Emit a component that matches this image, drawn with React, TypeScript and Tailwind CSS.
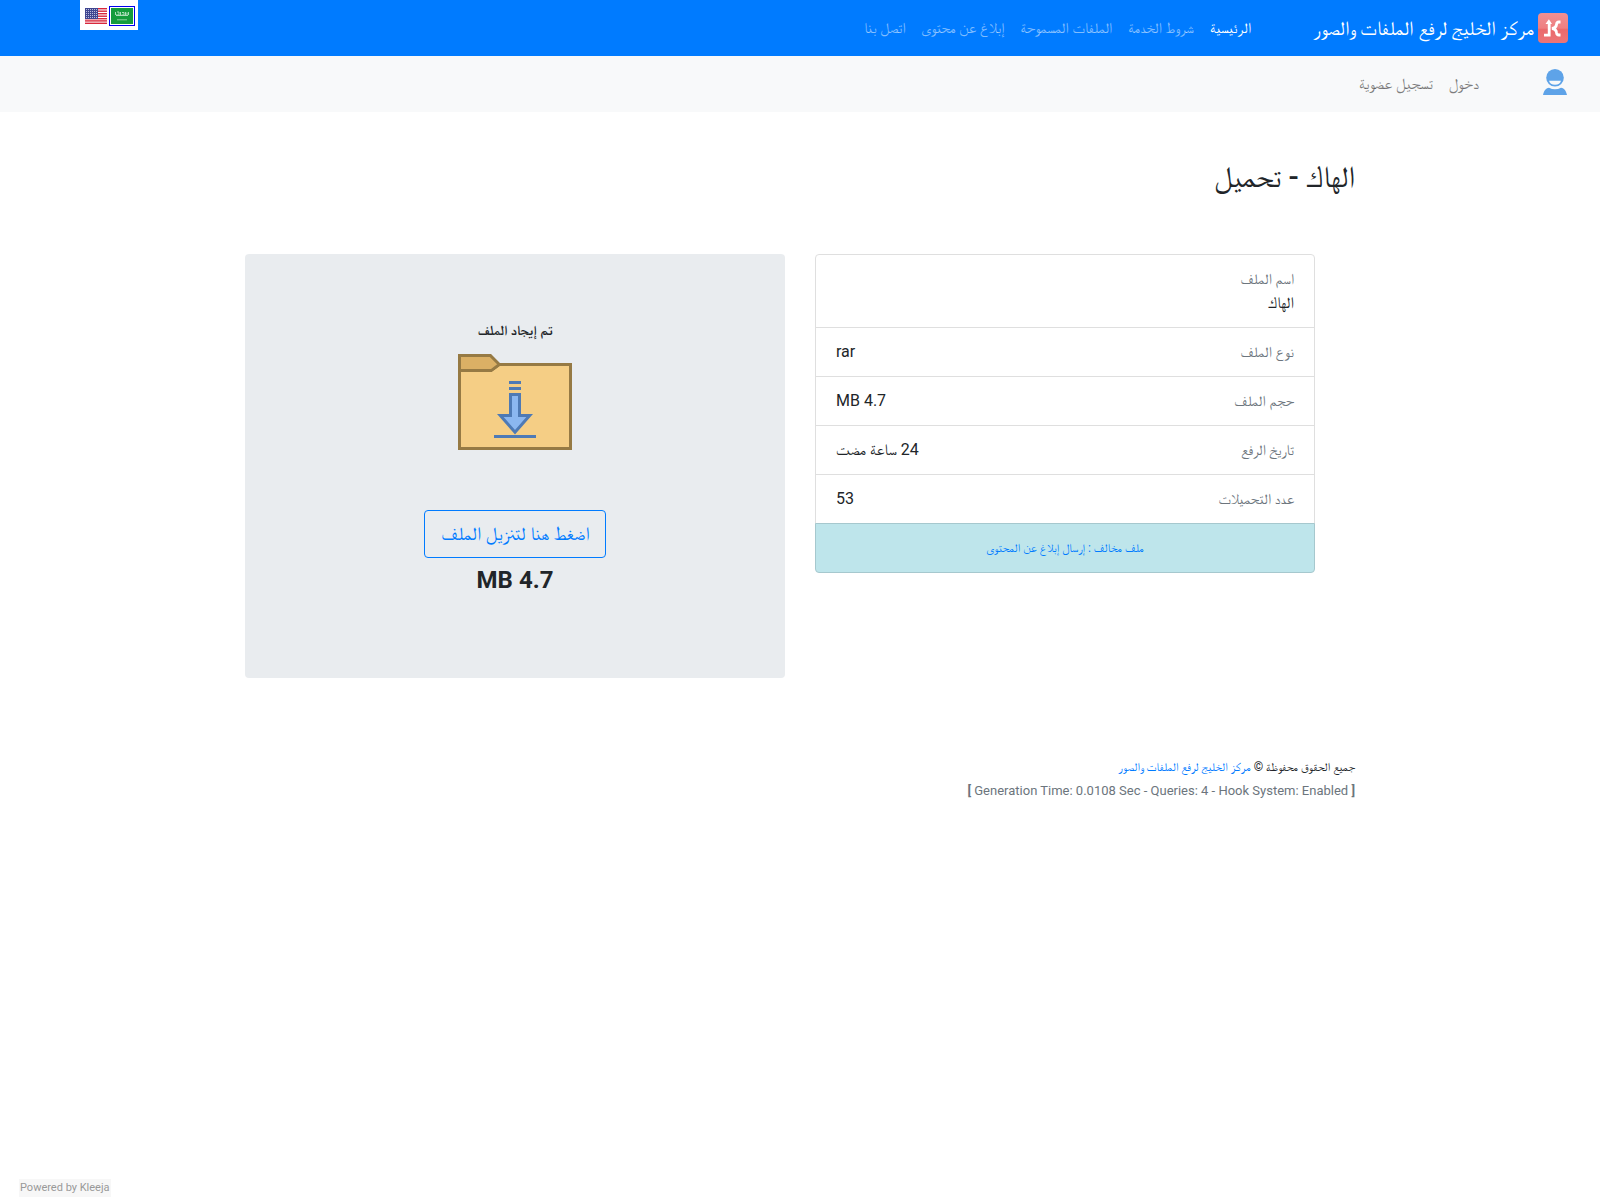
const navLinks = [
  { label: "الرئيسية", active: true },
  { label: "شروط الخدمة" },
  { label: "الملفات المسموحة" },
  { label: "إبلاغ عن محتوى" },
  { label: "اتصل بنا" },
];

const fileInfo = [
  { label: "نوع الملف", value: "rar" },
  { label: "حجم الملف", value: "4.7 MB" },
  { label: "تاريخ الرفع", value: "24 ساعة مضت" },
  { label: "عدد التحميلات", value: "53" },
];

function KleejaLogo() {
  return (
    <svg viewBox="0 0 30 30" className="h-[30px] w-[30px]" aria-hidden="true">
      <defs>
        <linearGradient id="logo-bg" x1="0" y1="0" x2="0" y2="1">
          <stop offset="0" stopColor="#f09092" />
          <stop offset="0.5" stopColor="#ee7f81" />
          <stop offset="0.55" stopColor="#ea6a6c" />
          <stop offset="1" stopColor="#ec7577" />
        </linearGradient>
      </defs>
      <rect width="30" height="30" rx="4" fill="url(#logo-bg)" />
      <path d="M6 22.2H11.2V9" fill="none" stroke="#fff" strokeWidth="2.8" />
      <path d="M7.5 11L10.9 6.2L14 11Z" fill="#fff" />
      <path
        d="M22.5 9H20.8Q18.8 9 18.5 11.5Q18.2 14.8 14 15.5Q18.2 16.2 18.5 19.5Q18.8 22 20.8 22H22.5"
        fill="none"
        stroke="#fff"
        strokeWidth="2.8"
      />
    </svg>
  );
}

function UserIcon() {
  return (
    <svg viewBox="0 0 25 30" className="h-[30px] w-[25px]" aria-hidden="true">
      <circle cx="12" cy="8.8" r="8.8" fill="#5ea3e8" />
      <path d="M6 11.7H18Q17 15.7 12 15.7Q7 15.7 6 11.7Z" fill="#f8f9fa" />
      <path
        d="M0 26C1 22 2.5 19.2 6 18.8Q12 21.8 18 18.8C21.5 19.2 23 22 24 26Z"
        fill="#5ea3e8"
      />
    </svg>
  );
}

function UsFlag() {
  return (
    <svg viewBox="0 0 22 16" className="h-4 w-[22px]" aria-hidden="true">
      <rect width="22" height="16" fill="#fff" />
      {[0, 2.5, 5, 7.5, 10, 12.2, 14.6].map((y) => (
        <rect key={y} y={y} width="22" height="1.4" fill="#d8283c" />
      ))}
      <rect width="13" height="11" fill="#3f4690" />
      {[1, 3, 5, 7, 9].map((y) =>
        [1, 3, 5, 7, 9, 11].map((x) => (
          <rect key={`${x}-${y}`} x={x} y={y} width="1" height="1" fill="#b9bcdc" />
        ))
      )}
    </svg>
  );
}

function SaFlag() {
  return (
    <svg viewBox="0 0 22 16" className="h-4 w-[22px]" aria-hidden="true">
      <rect width="22" height="16" fill="#149c3c" />
      <path
        d="M4.5 4V7M6 4H8V7H5M9.5 4V7.5M11 4.5H13V7H10.5M14.5 4V7M16 4.5V7M17.5 4V7M5 7.5H17"
        fill="none"
        stroke="#a9dcb7"
        strokeWidth="1"
      />
      <path d="M6 11.8H16" stroke="#8ccf9f" strokeWidth="1" />
    </svg>
  );
}

function FolderIcon() {
  return (
    <svg viewBox="0 0 40 40" className="h-[120px] w-[120px]" aria-hidden="true">
      <path d="M1.5 7.5H38.5V35.5H1.5Z" fill="#f5ce85" stroke="#967a44" />
      <path
        d="M1.5 9.5V4.5H11.8L14.8 7.5L12.2 9.5Z"
        fill="#dbb065"
        stroke="#967a44"
      />
      <path d="M2 10H12.3L15.2 8H38V35H2Z" fill="#f5ce85" />
      <path
        d="M18.5 24.5V17.5H21.5V24.5H24.9L20 30.1L15.1 24.5Z"
        fill="#8bb7f0"
        stroke="#4e7ab5"
      />
      <path d="M18 13.5H22M18 15.5H22M13 31.5H27" stroke="#4e7ab5" />
    </svg>
  );
}

export default function App() {
  return (
    <div
      dir="rtl"
      className="flex min-h-screen flex-col bg-white font-[Roboto,FreeSerif,'Liberation_Sans',sans-serif] text-base text-[#212529]"
    >
      <header>
        <nav className="relative flex h-14 items-center bg-[#007bff] px-8">
          <a href="#" className="flex items-center gap-1 text-xl text-white">
            <KleejaLogo />
            <span>مركز الخليج لرفع الملفات والصور</span>
          </a>
          <ul className="ms-[54px] flex text-[15px] leading-6">
            {navLinks.map((link) => (
              <li key={link.label}>
                <a
                  href="#"
                  className={`block p-2 ${link.active ? "text-white" : "text-white/50"}`}
                >
                  {link.label}
                </a>
              </li>
            ))}
          </ul>
          {/* Language switcher hangs from the top edge */}
          <div className="absolute top-0 left-20 flex h-[30px] items-center gap-px bg-white pt-[2px] pr-[3px] pl-1">
            <a href="#" aria-label="العربية" className="border border-[#0000ee] p-px">
              <SaFlag />
            </a>
            <a href="#" aria-label="English" className="p-px">
              <UsFlag />
            </a>
          </div>
        </nav>

        <nav className="flex h-14 items-center bg-[#f8f9fa] px-8">
          <a href="#" aria-label="الحساب">
            <UserIcon />
          </a>
          <ul className="ms-14 flex">
            <li>
              <a href="#" className="block p-2 text-black/50">دخول</a>
            </li>
            <li>
              <a href="#" className="block p-2 text-black/50">تسجيل عضوية</a>
            </li>
          </ul>
        </nav>
      </header>

      <main className="mx-auto w-full max-w-[1140px] px-[15px] pt-[46px]">
        <h2 className="text-[30px] leading-[38px] font-medium">الهاك - تحميل</h2>

        <div className="mt-[58px] grid grid-cols-2 items-start gap-[30px]">
          <ul className="ms-10">
            <li className="-mb-px rounded-t-sm border border-[#dfdfdf] px-5 py-3">
              <div className="text-[15px] leading-6 text-[#6c757d]">اسم الملف</div>
              <div>الهاك</div>
            </li>
            {fileInfo.map((item) => (
              <li
                key={item.label}
                className="-mb-px flex justify-between border border-[#dfdfdf] px-5 py-3"
              >
                <span className="text-[15px] leading-6 text-[#6c757d]">{item.label}</span>
                <span>{item.value}</span>
              </li>
            ))}
            <li className="relative flex justify-center rounded-b-sm border border-[#a6c8ce] bg-[#bee5eb] px-5 py-3">
              <a href="#" className="text-xs leading-6 text-[#007bff]">
                ملف مخالف : إرسال إبلاغ عن المحتوى
              </a>
            </li>
          </ul>

          <section className="flex flex-col items-center rounded-sm bg-[#e9ecef] px-8 py-16">
            <strong className="text-sm leading-6 font-bold">تم إيجاد الملف</strong>
            <FolderIcon />
            <a
              href="#"
              className="mt-12 rounded-sm border border-[#007bff] px-4 py-2 text-[19px] leading-[30px] text-[#007bff]"
            >
              اضغط هنا لتنزيل الملف
            </a>
            <strong className="mt-2 mb-5 text-2xl leading-7 font-bold">4.7 MB</strong>
          </section>
        </div>
      </main>

      <footer className="mx-auto mt-[77px] w-full max-w-[1140px] px-[15px]">
        <p className="text-xs leading-6">
          جميع الحقوق محفوظة ©{" "}
          <a href="#" className="text-[#007bff]">مركز الخليج لرفع الملفات والصور</a>
        </p>
        <p className="text-[13px] leading-6 text-[#6c757d]">
          <b>[</b>{" "}
          <span>Generation Time: 0.0108 Sec - Queries: 4 - Hook System: Enabled</span>{" "}
          <b>]</b>
        </p>
      </footer>

      <div className="mt-auto flex justify-end pb-[3px] pl-[19px]">
        <a
          href="#"
          dir="ltr"
          className="bg-[#f7f7f7] px-px text-[11px] leading-[18px] text-[#999999]"
        >
          Powered by Kleeja
        </a>
      </div>
    </div>
  );
}
